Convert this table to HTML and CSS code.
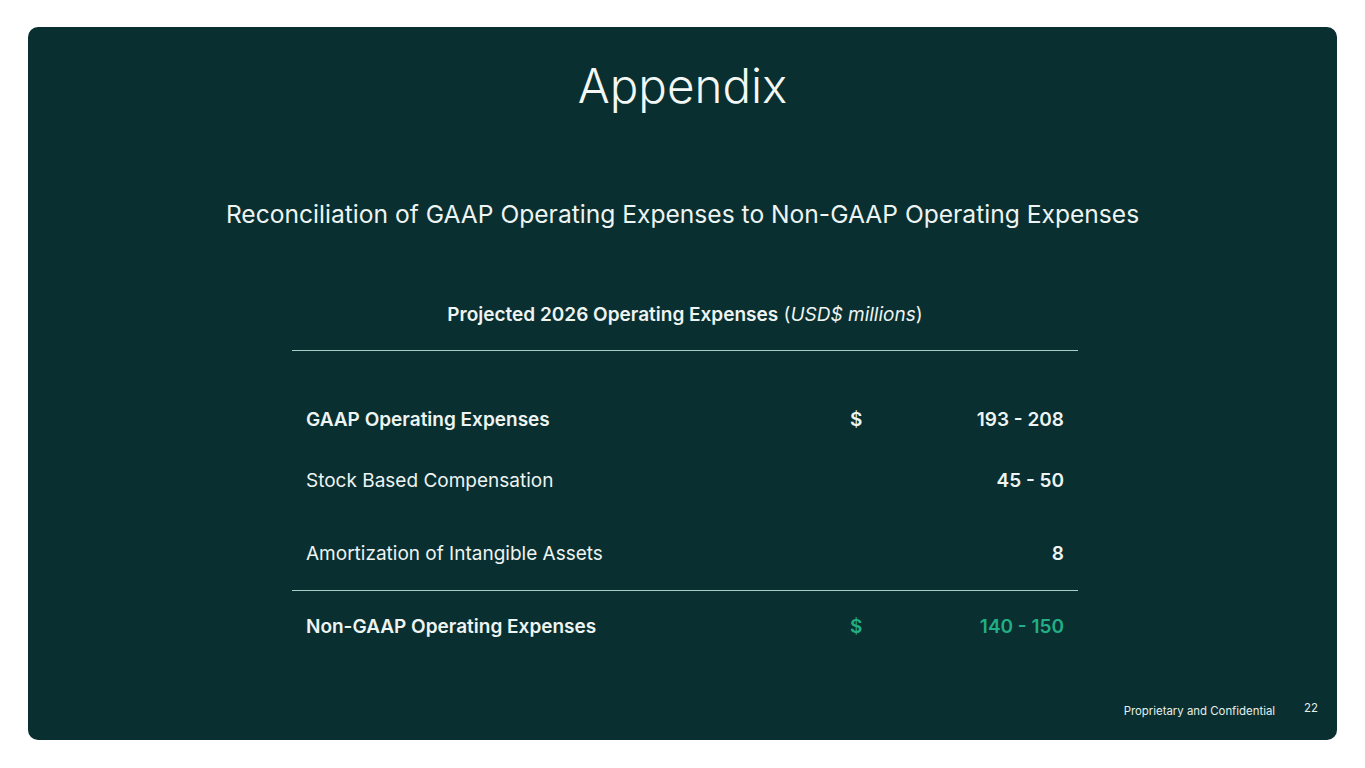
FILE: index.html
```html
<!DOCTYPE html>
<html lang="en">
<head>
<meta charset="utf-8">
<title>Appendix</title>
<link rel="stylesheet" href="styles.css">
</head>
<body>
<main class="slide">
  <h1 class="title">Appendix</h1>
  <h2 class="subtitle">Reconciliation of GAAP Operating Expenses to Non-GAAP Operating Expenses</h2>
  <section class="recon">
    <div class="recon-head"><strong>Projected 2026 Operating Expenses</strong> (<em>USD$ millions</em>)</div>
    <div class="recon-body">
      <div class="row row-gaap strong">
        <span class="label">GAAP Operating Expenses</span>
        <span class="cur">$</span>
        <span class="num">193 - 208</span>
      </div>
      <div class="row row-sbc">
        <span class="label">Stock Based Compensation</span>
        <span class="cur"></span>
        <span class="num">45 - 50</span>
      </div>
      <div class="row row-amort">
        <span class="label">Amortization of Intangible Assets</span>
        <span class="cur"></span>
        <span class="num">8</span>
      </div>
    </div>
    <div class="recon-total">
      <div class="row strong total">
        <span class="label">Non-GAAP Operating Expenses</span>
        <span class="cur">$</span>
        <span class="num">140 - 150</span>
      </div>
    </div>
  </section>
  <footer class="foot">
    <span class="foot-note">Proprietary and Confidential</span>
    <span class="foot-page">22</span>
  </footer>
</main>
</body>
</html>
```

FILE: styles.css
```css
html, body {
  margin: 0;
  padding: 0;
  background: #ffffff;
}

body {
  font-family: "Inter", "Liberation Sans", sans-serif;
  color: #eef4f1;
}

.slide {
  box-sizing: border-box;
  margin: 27px 28px 0 28px;
  height: 713px;
  border-radius: 10px;
  background: #092f31;
  display: flex;
  flex-direction: column;
  align-items: center;
  padding-top: 30px;
}

.title {
  margin: 0;
  font-weight: 300;
  font-size: 47.5px;
  line-height: 58px;
  color: #f3f7f5;
}

.subtitle {
  margin: 85px 0 0 0;
  font-weight: 400;
  font-size: 24.6px;
  line-height: 28px;
  color: #eef4f1;
}

.recon {
  margin-top: 76px;
  margin-left: 5px;
  width: 786px;
}

.recon-head {
  text-align: center;
  font-size: 19px;
  line-height: 22px;
  padding-bottom: 24px;
  border-bottom: 1.5px solid #a9cec7;
}

.recon-head strong {
  font-weight: 600;
}

.recon-head em {
  font-style: italic;
}

.recon-body {
  padding-top: 58px;
  padding-bottom: 25px;
  border-bottom: 1.5px solid #a9cec7;
}

.row {
  display: grid;
  grid-template-columns: 1fr 12px 202px;
  padding: 0 14px;
  font-size: 19px;
  line-height: 22px;
}

.row .num {
  text-align: right;
  font-weight: 600;
}

.row .cur {
  font-weight: 600;
}

.row.strong .label {
  font-weight: 600;
}

.row-sbc {
  margin-top: 39px;
}

.row-amort {
  margin-top: 51px;
}

.recon-total {
  padding-top: 25px;
}

.row.total .cur,
.row.total .num {
  color: #22ae84;
}

.foot {
  margin-top: auto;
  align-self: flex-end;
  display: flex;
  align-items: flex-start;
  gap: 29px;
  padding: 0 19px 21px 0;
  font-size: 11.4px;
  line-height: 16px;
  color: #e6efec;
}

.foot-page {
  margin-top: -3px;
}
```
